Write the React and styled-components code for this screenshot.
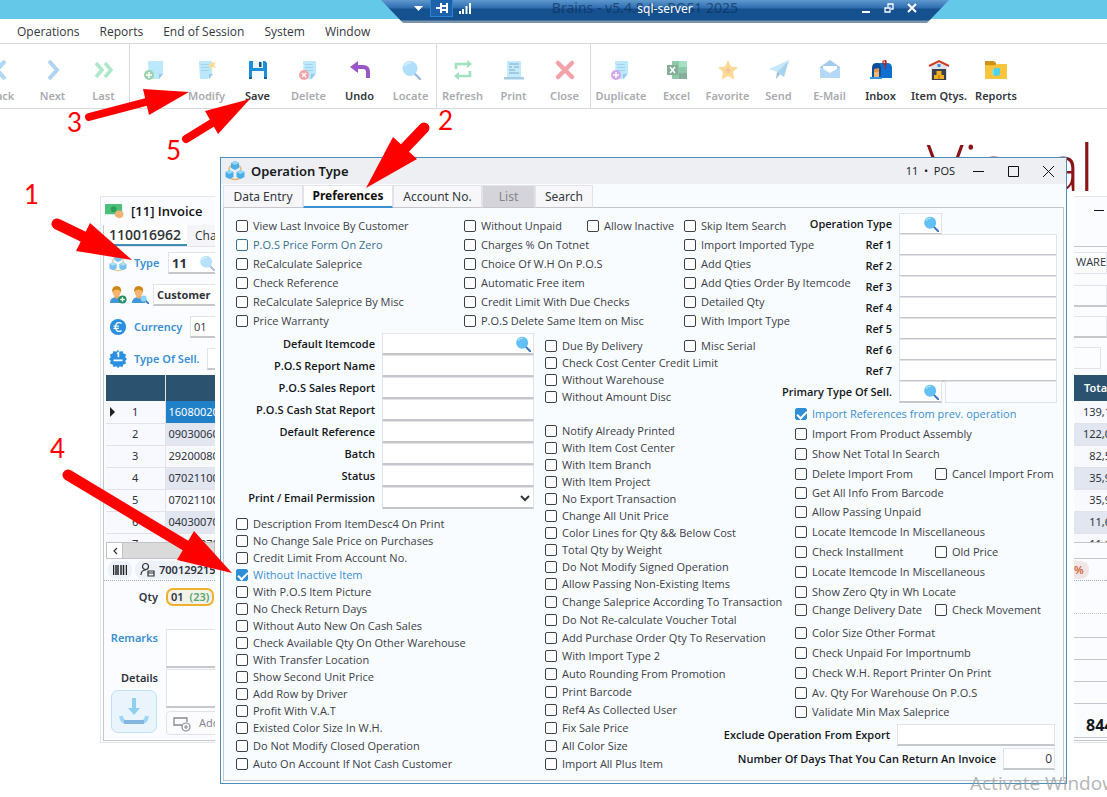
import React, { useState } from "react";
import styled, { createGlobalStyle, css } from "styled-components";

const Global = createGlobalStyle`
  * { box-sizing: border-box; }
  html, body, #root { height: 100%; }
  body {
    margin: 0;
    overflow: hidden;
    background: #fff;
    color: #33373d;
    font: 11px/16px "Open Sans", "Noto Sans", sans-serif;
  }
  button, input, select, textarea { font: inherit; color: inherit; }
  button { cursor: pointer; }
  svg { flex: none; }
`;

const wide = '"Noto Sans", "Open Sans", sans-serif';

const c = {
  blue: "#3c8fd0",
  edge: "#4a90b8",
  line: "#c6c7cd",
  soft: "#e2e3ea",
  pane: "#f8fcff",
  header: "#2b536f",
};

const Desktop = styled.div`
  position: relative;
  min-height: 100%;
  overflow: hidden;
`;

/* ---------- icons ---------- */
const Svg = ({ size = 20, box = 20, children, ...rest }) => (
  <svg width={size} height={size} viewBox={`0 0 ${box} ${box}`} fill="none" aria-hidden="true" {...rest}>
    {children}
  </svg>
);

const Page = ({ x = 3 }) => (
  <>
    <path d={`M${x} 1h13v13l-4 5H${x + 1}z`} fill="#79d3f7" />
    <path d="M12 19v-5h4z" fill="#3a8fd8" />
    <path d={`M${x + 2} 4.500h8M${x + 2} 7.500h8M${x + 2} 10.500h8`} stroke="#4aa6dd" strokeWidth="1.200" />
  </>
);

const icons = {
  back: <path d="M13 1 5 10l8 9" stroke="#5fb2ea" strokeWidth="4" />,
  next: <path d="m6 1 8 9-8 9" stroke="#5fa9e4" strokeWidth="4" />,
  last: <path d="m2 3 6 7-6 7M11 3l6 7-6 7" stroke="#5ed197" strokeWidth="3.500" />,
  add: (
    <>
      <path d="M2 1h15v13l-4 5H3z" fill="#79d3f7" />
      <path d="M13 19v-5h4z" fill="#3a8fd8" />
      <circle cx="3" cy="15" r="5" fill="#3ba55d" />
      <path d="M3 12v6M0 15h6" stroke="#fff" strokeWidth="1.500" />
    </>
  ),
  modify: (
    <>
      <Page x={2} />
      <path d="m14 0 1 3 4-1-2 3 2 3-4-1-2 3v-4l-3-1 4-1z" fill="#f6b92c" />
    </>
  ),
  save: (
    <>
      <path d="M1 1h16l2 2v16H1z" fill="#1d8fd6" />
      <path d="M5 1h10v7H5z" fill="#e9f5fc" />
      <path d="M11 2h2.500v5H11z" fill="#1b4f80" />
      <path d="M4 11h12v8H4z" fill="#f4fafe" />
      <path d="M1 17h3v2H1zM16 17h3v2h-3z" fill="#12609c" />
    </>
  ),
  del: (
    <>
      <Page x={4} />
      <circle cx="5" cy="15" r="5" fill="#ea4d57" />
      <path d="m3 13 4 4M7 13l-4 4" stroke="#fff" strokeWidth="1.300" />
    </>
  ),
  undo: (
    <>
      <path d="M7 7h6q5 0 5 5v6" stroke="#9a55c7" strokeWidth="4" />
      <path d="M8 1v12L0 7z" fill="#9a55c7" />
    </>
  ),
  locate: (
    <>
      <path d="m13 13 6 6" stroke="#3574c4" strokeWidth="2.400" strokeLinecap="round" />
      <circle cx="9" cy="8.500" r="7.500" fill="#62c1f4" />
      <path d="M4 6q2-4 6-3" stroke="#b5e4fc" strokeWidth="1.500" />
    </>
  ),
  refresh: (
    <>
      <path d="M3 9V4h12M17 11v5H5" stroke="#43c47f" strokeWidth="2.600" />
      <path d="m14 0 5 4-5 4zM6 12l-5 4 5 4z" fill="#43c47f" />
    </>
  ),
  print: (
    <>
      <path d="M3 1h14v17H3z" fill="#8bd8f8" />
      <path d="M0 17h20v2.500H0z" fill="#4d96cf" />
      <path d="M5 4h10M5 7h3M10 7h5M5 10h6M5 13h10" stroke="#2f7db7" strokeWidth="1.300" />
    </>
  ),
  close: <path d="m3 3 14 14M17 3 3 17" stroke="#ea4553" strokeWidth="4.500" strokeLinecap="round" />,
  duplicate: (
    <>
      <Page x={4} />
      <circle cx="5" cy="15" r="5" fill="#a64fdb" />
      <path d="M5 12v6M2 15h6" stroke="#fff" strokeWidth="1.500" />
    </>
  ),
  excel: (
    <>
      <path d="M5 1h15v18H5z" fill="#21905a" />
      <path d="M12 1h8v6h-8z" fill="#4ec68d" />
      <path d="M12 13h8v6h-8z" fill="#14603a" />
      <path d="M0 5h11v10H0z" fill="#0a6233" />
      <path d="m3 7 5 6M8 7l-5 6" stroke="#fff" strokeWidth="1.500" />
    </>
  ),
  favorite: (
    <>
      <path d="m10 0 3 6.500 7 .8-5 4.700 1.300 7.500L10 16l-6.300 3.500L5 12 0 7.300l7-.8z" fill="#f7b92e" />
      <path d="M10 7.500v6M7 10.500h6" stroke="#ee7b39" strokeWidth="1.500" />
    </>
  ),
  send: (
    <>
      <path d="M0 9 20 0 8 12z" fill="#8fd3f7" />
      <path d="M20 0 15 17 8 12z" fill="#53a8de" />
      <path d="m8 12-1 7 4-5z" fill="#2f7fbb" />
    </>
  ),
  email: (
    <>
      <path d="m0 7 10-7 10 7v11H0z" fill="#4596dc" />
      <path d="M3 6h14v7H3z" fill="#fff" />
      <path d="m0 7 10 6 10-6v11H0z" fill="#6bb5ee" />
    </>
  ),
  inbox: (
    <>
      <path d="M5 3h11q5 0 5 5v10H5z" fill="#0f6fd0" />
      <path d="M1 18V8q0-5 4.500-5T10 8v10z" fill="#0b4f9c" />
      <path d="M3 17V9l5-1v9z" fill="#e79541" />
      <path d="M3 12h5v5H3z" fill="#f4b873" />
      <path d="M-1 17h12v2H-1z" fill="#2f93e8" />
      <path d="M14.500 9V0M12 1h3v3h-3z" stroke="#b02028" strokeWidth="1.200" />
    </>
  ),
  house: (
    <>
      <path d="M2 6 10 1l8 5v14H2z" fill="#dfe4ea" />
      <path d="M0 6 10 1l10 5" stroke="#cf3a24" strokeWidth="2" />
      <path d="M3 9h14v11H3z" fill="#3a4148" />
      <path d="M8.500 4h3v3h-3z" fill="#3b8fd9" />
      <path d="M5 15h10v4H5zM7.500 11h5v4h-5z" fill="#f0b020" />
      <path d="M10 15v4" stroke="#a87208" />
    </>
  ),
  folder: (
    <>
      <path d="M-1 1h9l2 2v5H-1z" fill="#cf9315" />
      <path d="M-1 5q11 1 12-1h10v14q0 1-1 1H0q-1 0-1-1z" fill="#f8c53c" />
      <path d="M8 8h6v6l-2 2H8z" fill="#4fd3ef" />
      <path d="M6 9.500h2v5H6z" fill="#8fe0c0" />
    </>
  ),
};

const Cubes = ({ size = 20, faded }) => (
  <Svg size={size} opacity={faded ? 0.75 : 1}>
    <path d="M4 9q0-5 6-6 6 1 6 6M5 17q5 3 10 0" stroke="#e3b778" strokeWidth="1.500" />
    <path d="m10 0 4 2v5l-4 2-4-2V2zM4.500 9l4 2v5l-4 2-4-2v-5zM15.500 9l4 2v5l-4 2-4-2v-5z" fill="#4aaeea" />
    <path d="m10 0 4 2-4 2-4-2zM4.500 9l4 2-4 2-4-2zM15.500 9l4 2-4 2-4-2z" fill="#93d8f9" />
  </Svg>
);

const Lens = ({ size = 16, faded }) => (
  <Svg size={size} opacity={faded ? 0.45 : 1}>{icons.locate}</Svg>
);

const Person = ({ children }) => (
  <Svg size={18}>
    <path d="M1 19q0-6 7.500-7T16 19z" fill="#3c97dd" />
    <path d="M6 10h5v3q-2.500 2-5 0z" fill="#f0a860" />
    <ellipse cx="8.500" cy="6.500" rx="4.500" ry="5.500" fill="#f7b56f" />
    <path d="M3.500 7Q3 0 8.500 0T13.500 7Q12 4 8.500 4T3.500 7z" fill="#c98714" />
    {children}
  </Svg>
);

/* ---------- top bars ---------- */
const TitleBar = styled.header`
  height: 19px;
  background: #64c8e8;
`;
const SessionBar = styled.div`
  position: absolute;
  z-index: 3;
  top: 0;
  left: 381px;
  right: 158px;
  height: 23px;
  padding: 0 26px;
  display: grid;
  grid-template-columns: 1fr auto 1fr;
  align-items: start;
  color: #fff;
  font: 12px/18px ${wide};
  background: linear-gradient(#5e98cd 0, #2e6cb0 8px, #15508f 9px, #15508f 20px, #7b93ab 21px);
  clip-path: polygon(0 0, 100% 0, calc(100% - 22px) 100%, 22px 100%);
`;
const AppTitle = styled.span`
  position: absolute;
  top: 0;
  right: 211px;
  font: 14px/16px ${wide};
  color: #0b2f58;
  opacity: 0.65;
`;
const SessionName = styled.span`
  position: relative;
`;
const SessionTools = styled.div`
  display: flex;
  justify-content: ${(p) => (p.$end ? "flex-end" : "flex-start")};
`;
const SessionButton = styled.button`
  width: 23px;
  height: 17px;
  padding: 0;
  border: 1px solid ${(p) => (p.$on ? "#2b84d4" : "transparent")};
  border-top: 0;
  background: ${(p) => (p.$on ? "#1c62ab" : "none")};
  display: grid;
  place-items: center;
`;

const MenuBar = styled.nav`
  height: 25px;
  padding: 1px 0 0 17px;
  display: flex;
  align-items: center;
  gap: 20px;
  border-bottom: 1px solid #d9d9dc;
`;
const MenuItem = styled.button`
  padding: 0;
  border: 0;
  background: none;
  font-size: 12px;
  line-height: 18px;
`;

const Toolbar = styled.div`
  height: 65px;
  margin-left: -24px;
  display: flex;
  border-bottom: 1px solid #d9d9dc;
`;
const ToolGroup = styled.div`
  display: flex;
  border-right: ${(p) => (p.$last ? 0 : "1px solid #d9d9dc")};
`;
const ToolButton = styled.button`
  width: ${(p) => p.$w || 51}px;
  padding: 16px 0 0;
  border: 0;
  background: none;
  display: flex;
  flex-direction: column;
  align-items: center;
  gap: 8px;
  font-family: ${wide};
  font-weight: 600;
  white-space: nowrap;
  color: ${(p) => (p.disabled ? "#a9abb0" : "#33373d")};
  svg { opacity: ${(p) => (p.disabled ? 0.5 : 1)}; overflow: visible; }
`;

const tools = [
  [["back", "Back"], ["next", "Next"], ["last", "Last"]],
  [["add", ""], ["modify", "Modify"], ["save", "Save", 1], ["del", "Delete"], ["undo", "Undo", 1], ["locate", "Locate"]],
  [["refresh", "Refresh"], ["print", "Print"], ["close", "Close"]],
  [["duplicate", "Duplicate", 0, 60], ["excel", "Excel"], ["favorite", "Favorite"], ["send", "Send"], ["email", "E-Mail"],
    ["inbox", "Inbox", 1], ["house", "Item Qtys.", 1, 66], ["folder", "Reports", 1, 48]],
];

const Brand = styled.div`
  position: absolute;
  top: 122px;
  right: 13px;
  font: 300 64px/90px "Open Sans", "Noto Sans", sans-serif;
  color: #8b1217;
`;

/* ---------- shared fields ---------- */
const box = css`
  min-width: 0;
  height: 22px;
  padding: 0 4px;
  border: 1px solid ${c.soft};
  border-bottom: 2px solid ${c.line};
  border-radius: 0;
  background: #fff;
  outline: none;
`;
const TextInput = styled.input`
  ${box}
  width: 100%;
  padding: 0 2px 0 3px;
  text-align: ${(p) => (p.$right ? "right" : "left")};
  font-weight: ${(p) => (p.$bold ? 700 : 400)};
  font-size: ${(p) => p.$size || 12}px;
`;
const Select = styled.select`
  ${box}
  width: 100%;
`;
const FieldSlot = styled.span`
  flex: none;
  position: relative;
  display: flex;
  width: ${(p) => p.$w}px;
`;
const LensButton = styled.button`
  position: absolute;
  right: 2px;
  top: 2px;
  width: 18px;
  height: 18px;
  padding: 0;
  border: 0;
  background: none;
  display: grid;
  place-items: center;
`;

/* ---------- invoice window ---------- */
const Invoice = styled.section`
  position: absolute;
  top: 196px;
  left: 100px;
  right: 0;
  display: flex;
  justify-content: space-between;
  color: #2f3339;
`;
const InvoiceSide = styled.div`
  width: ${(p) => p.$w}px;
  height: 547px;
  overflow: hidden;
  background: #fafcff;
  border: solid #e3e5ea;
  border-width: ${(p) => (p.$left ? "1px 0 1px 1px" : "1px 0")};
  display: flex;
  flex-direction: column;
`;
const InvoiceTitle = styled.div`
  height: 28px;
  padding-left: 4px;
  display: flex;
  align-items: center;
  gap: 7px;
  white-space: nowrap;
  font-size: 13px;
  font-weight: 600;
  color: #111;
`;
const InvoiceInner = styled.div`
  flex: 1;
  margin-left: ${(p) => (p.$left ? 2 : 0)}px;
  margin-bottom: 1px;
  border: solid ${c.line};
  border-width: ${(p) => (p.$left ? "0 0 1px 1px" : "0 0 1px")};
`;
const InvoiceTabs = styled.div`
  display: flex;
  height: 22px;
  border-bottom: 1px solid ${c.soft};
`;
const InvoiceTab = styled.button`
  flex: none;
  width: 83px;
  padding: 0 0 0 ${(p) => (p.$on ? 5 : 8)}px;
  text-align: left;
  border: 0;
  border-bottom: ${(p) => (p.$on ? "2px solid #3d8fb5" : "0")};
  background: ${(p) => (p.$on ? "#fff" : "#f5f5f9")};
  font-size: ${(p) => (p.$on ? 14 : 12)}px;
  line-height: 18px;
  font-weight: ${(p) => (p.$on ? 600 : 400)};
`;
const InvoiceRow = styled.div`
  height: 32px;
  padding-left: 5px;
  display: flex;
  align-items: center;
  gap: 4px;
  white-space: nowrap;
`;
const BlueLabel = styled.label`
  flex: none;
  width: ${(p) => p.$w}px;
  padding-left: 3px;
  font-family: ${wide};
  font-weight: 600;
  color: ${c.blue};
`;
const Grid = styled.table`
  width: ${(p) => p.$w}px;
  margin-left: ${(p) => (p.$left ? 2 : 0)}px;
  table-layout: fixed;
  border-collapse: collapse;
  font-family: ${wide};
  th { height: 26px; padding: 0 0 0 10px; text-align: left; background: ${c.header}; color: #fff; font-weight: 600; }
  th + th { border-left: 1px solid #dfe5ec; }
  td { height: 22px; padding: 0; border-bottom: 1px solid ${c.soft}; background: #f7f9ff; white-space: nowrap; }
  td:last-child { text-align: ${(p) => (p.$left ? "left" : "right")}; padding-left: 3px; border-left: ${(p) => (p.$left ? 1 : 0)}px solid ${c.soft}; }
  tr:nth-child(even) td:last-child { background: #e1e6f1; }
`;
const NumCell = styled.td`
  position: relative;
  text-align: center;
`;
const PickCell = styled.td`
  && { background: #2080c8; color: #fff; }
`;
const Marker = styled.i`
  position: absolute;
  left: 4px;
  top: 6px;
  border: solid transparent;
  border-width: 5px 0 5px 5px;
  border-left-color: #222;
`;
const GridClip = styled.div`
  height: 167px;
  overflow: hidden;
`;
const HScroll = styled.div`
  height: 17px;
  margin-left: 2px;
  display: flex;
  background: #dadada;
  border: 1px solid #c2c2c6;
  button { width: 16px; padding: 0; border: 0; border-right: 1px solid #c2c2c6; background: #fff; line-height: 14px; }
`;
const Chips = styled.div`
  height: 22px;
  padding-left: 4px;
  display: flex;
  align-items: center;
  gap: 3px;
  border-bottom: 1px dotted #a5a9b5;
`;
const Chip = styled.span`
  flex: none;
  height: 18px;
  padding: 0 5px;
  display: flex;
  align-items: center;
  gap: 4px;
  border-radius: 8px;
  background: ${(p) => (p.$warm ? "#f1e6e6" : "#edf1fa")};
  color: ${(p) => (p.$warm ? "#d2603a" : "#2f3339")};
  font-family: ${wide};
  font-weight: 600;
`;
const ChipEdge = styled.div`
  display: flex;
  margin-left: -9px;
`;
const QtyCell = styled.div`
  height: 40px;
  display: flex;
  align-items: flex-start;
`;
const QtyChip = styled.output`
  height: 18px;
  padding: 0 3px;
  display: flex;
  align-items: center;
  gap: 6px;
  border: 2px solid #efb02e;
  border-radius: 7px;
  background: #f3f1ec;
  font-weight: 600;
  span { color: #55a868; }
`;
const SideForm = styled.div`
  display: grid;
  grid-template-columns: 54px 1fr;
  column-gap: 8px;
  row-gap: 1px;
  padding-top: 7px;
  font-family: ${wide};
  font-weight: 600;
`;
const SideLabel = styled.label`
  padding-top: 1px;
  text-align: right;
  color: ${(p) => (p.$blue ? c.blue : "#2f3339")};
`;
const Area = styled.textarea`
  ${box}
  width: 100%;
  height: 39px;
  resize: none;
`;
const BigButton = styled.button`
  width: 46px;
  height: 43px;
  margin: -19px 0 0 7px;
  padding: 0;
  border: 1px solid #bfe0f6;
  border-radius: 7px;
  background: #e9f4fd;
  display: grid;
  place-items: center;
`;
const AddButton = styled.button`
  height: 24px;
  margin-top: 2px;
  padding: 0 0 0 6px;
  border: 1px solid ${c.soft};
  border-radius: 4px;
  background: #fcfcfe;
  display: flex;
  align-items: center;
  gap: 8px;
  color: #85888f;
  font-weight: 400;
  white-space: nowrap;
`;
const RightField = styled.div`
  height: 22px;
  margin: ${(p) => p.$m || "0 0 9px"};
  padding-left: 2px;
  line-height: 18px;
  border: 1px solid ${c.soft};
  border-left: 0;
  border-bottom: ${(p) => (p.$flat ? `1px solid ${c.soft}` : `2px solid ${c.line}`)};
  background: #fcfdff;
`;
const Rule = styled.div`
  height: ${(p) => p.$h}px;
  border-bottom: 1px ${(p) => p.$kind || "solid"} ${c.line};
`;
const GrandTotal = styled.div`
  height: 34px;
  padding: 9px 0 0 12px;
  font-size: 16px;
  line-height: 24px;
  font-weight: 700;
  color: #14181d;
  border-bottom: 1px solid ${c.line};
`;

/* ---------- dialog ---------- */
const Dialog = styled.section`
  position: absolute;
  z-index: 1;
  top: 157px;
  left: 220px;
  right: 40px;
  padding: 0 2px 2px;
  border: 1px solid ${c.edge};
  background: ${c.pane};
`;
const DialogTitle = styled.div`
  height: 26px;
  margin: 0 -2px;
  padding-left: 4px;
  display: flex;
  align-items: center;
  gap: 6px;
  background: #eeeff2;
  color: #16191d;
  h1 { margin: 0; flex: 1; font: 600 13px/18px ${wide}; }
`;
const WindowButton = styled.button`
  width: 35px;
  height: 26px;
  padding: 0;
  border: 0;
  background: none;
  display: grid;
  place-items: center;
`;
const WindowButtons = styled.div`
  display: flex;
`;
const Tabs = styled.div`
  margin-top: 1px;
  height: 23px;
  display: flex;
`;
const Tab = styled.button`
  width: ${(p) => p.$w}px;
  padding: 0;
  border: 1px solid ${c.soft};
  border-bottom: ${(p) => (p.$on ? `2px solid ${c.blue}` : `1px solid ${c.line}`)};
  background: ${(p) => (p.disabled ? "#d5d4da" : p.$on ? "#fff" : "#f7f7fa")};
  color: ${(p) => (p.disabled ? "#85868d" : p.$on ? "#111" : "#33373d")};
  font: ${(p) => (p.$on ? 700 : 400)} 12px/16px ${wide};
`;
const Pane = styled.form`
  display: flex;
  padding: 8px 6px 7px 12px;
  border: 1px solid ${c.line};
  margin-top: -1px;
`;
const Main = styled.div`
  flex: 1;
  min-width: 0;
`;
const Aside = styled.div`
  flex: none;
  width: 262px;
  margin-top: -3px;
`;
const TopGrid = styled.div`
  display: grid;
  grid-template-columns: 228px 220px 1fr;
`;
const Split = styled.div`
  display: grid;
  grid-template-columns: 309px 1fr;
`;
const Stack = styled.div`
  padding-top: ${(p) => p.$top || 0}px;
`;
const LeftFields = styled.div`
  width: 298px;
`;
const Line = styled.div`
  height: ${(p) => p.$h}px;
  display: grid;
  grid-template-columns: ${(p) => p.$split || 140}px 1fr;
  align-items: center;
`;
const Option = styled.label`
  display: flex;
  align-items: center;
  gap: 5px;
  white-space: nowrap;
  color: ${(p) => p.$tone || "#3c4047"};
`;
const Tick = styled.input`
  appearance: none;
  flex: none;
  position: relative;
  width: 12px;
  height: 12px;
  margin: 0;
  border: 1px solid currentColor;
  border-radius: 2px;
  background: #fff;
  &:checked { background: #2f8fd6; border-color: #2f8fd6; }
  &:checked::after {
    content: "";
    position: absolute;
    left: 3px;
    top: 0;
    width: 4px;
    height: 8px;
    border: solid #fff;
    border-width: 0 2px 2px 0;
    transform: rotate(45deg);
  }
`;
const FieldRow = styled.div`
  height: ${(p) => p.$h}px;
  padding-right: ${(p) => p.$pad || 0}px;
  display: flex;
  align-items: center;
  justify-content: flex-end;
  gap: 7px;
  white-space: nowrap;
`;
const FieldLabel = styled.label`
  font-weight: 600;
  color: #14171b;
`;
const ReadOnly = styled.input`
  ${box}
  flex: 1;
  margin-left: 3px;
  background: #fafcff;
  border-bottom: 1px solid ${c.soft};
`;

const Check = ({ text, on, tone }) => {
  const [v, setV] = useState(!!on);
  return (
    <Option $tone={v ? c.blue : tone}>
      <Tick type="checkbox" checked={v} onChange={(e) => setV(e.target.checked)} />
      {text}
    </Option>
  );
};

const List = ({ items, h, top, split }) => (
  <Stack $top={top}>
    {items.map((it, i) => {
      const parts = Array.isArray(it) ? it : [it];
      return (
        <Line key={i} $h={h} $split={split}>
          {parts.map((t) => (
            <Check key={t} text={t.replace("*", "")} on={t.endsWith("*")} tone={t.startsWith("P.O.S Price") ? "#39708f" : undefined} />
          ))}
        </Line>
      );
    })}
  </Stack>
);

const Field = ({ label, id, h, w, lens, select, right, value, pad, slot, extra }) => (
  <FieldRow $h={h} $pad={pad}>
    <FieldLabel htmlFor={id}>{label}</FieldLabel>
    <FieldSlot $w={slot || w}>
      <FieldSlot $w={w}>
        {select ? <Select id={id} /> : <TextInput id={id} defaultValue={value} $right={right} />}
        {lens && (
          <LensButton type="button" aria-label={`Find ${label}`}>
            <Lens />
          </LensButton>
        )}
      </FieldSlot>
      {extra}
    </FieldSlot>
  </FieldRow>
);

const col1 = ["View Last Invoice By Customer", "P.O.S Price Form On Zero", "ReCalculate Saleprice", "Check Reference", "ReCalculate Saleprice By Misc", "Price Warranty"];
const col2 = [["Without Unpaid", "Allow Inactive"], "Charges % On Totnet", "Choice Of W.H On P.O.S", "Automatic Free item", "Credit Limit With Due Checks", "P.O.S Delete Same Item on Misc"];
const col3 = ["Skip Item Search", "Import Imported Type", "Add Qties", "Add Qties Order By Itemcode", "Detailed Qty", "With Import Type"];
const leftFields = ["Default Itemcode", "P.O.S Report Name", "P.O.S Sales Report", "P.O.S Cash Stat Report", "Default Reference", "Batch", "Status", "Print / Email Permission"];
const left1 = ["Description From ItemDesc4 On Print", "No Change Sale Price on Purchases", "Credit Limit From Account No.", "Without Inactive Item*", "With P.O.S Item Picture", "No Check Return Days", "Without Auto New On Cash Sales", "Check Available Qty On Other Warehouse", "With Transfer Location", "Show Second Unit Price", "Add Row by Driver", "Profit With V.A.T"];
const left2 = ["Existed Color Size In W.H.", "Do Not Modify Closed Operation", "Auto On Account If Not Cash Customer"];
const mid1 = [["Due By Delivery", "Misc Serial"], "Check Cost Center Credit Limit", "Without Warehouse", "Without Amount Disc"];
const mid2 = ["Notify Already Printed", "With Item Cost Center", "With Item Branch", "With Item Project", "No Export Transaction", "Change All Unit Price", "Color Lines for Qty && Below Cost", "Total Qty by Weight", "Do Not Modify Signed Operation"];
const mid3 = ["Allow Passing Non-Existing Items", "Change Saleprice According To Transaction", "Do Not Re-calculate Voucher Total", "Add Purchase Order Qty To Reservation", "With Import Type 2", "Auto Rounding From Promotion", "Print Barcode", "Ref4 As Collected User", "Fix Sale Price", "All Color Size", "Import All Plus Item"];
const right1 = ["Import References from prev. operation*", "Import From Product Assembly", "Show Net Total In Search", ["Delete Import From", "Cancel Import From"]];
const right3 = ["Allow Passing Unpaid", "Locate Itemcode In Miscellaneous", ["Check Installment", "Old Price"], "Locate Itemcode In Miscellaneous", "Show Zero Qty in Wh Locate"];
const right5 = ["Color Size Other Format", "Check Unpaid For Importnumb", "Check W.H. Report Printer On Print"];

const items = ["16080020", "09030060", "29200080", "07021100", "07021100", "04030070", "05010070"];
const totals = ["139,1", "122,0", "82,5", "35,9", "35,9", "11,6", "11,1"];

/* ---------- callouts ---------- */
const Callouts = styled.svg`
  position: absolute;
  z-index: 4;
  top: 0;
  left: 0;
  pointer-events: none;
  text { font: 26px Lato, sans-serif; fill: #f00; }
`;
const Watermark = styled.div`
  position: absolute;
  z-index: 2;
  top: 771px;
  left: 970px;
  font-size: 19px;
  line-height: 24px;
  white-space: nowrap;
  color: #9a9da2;
  opacity: 0.75;
`;

const arrows = [
  ["M89 117 146 102", 8, "143,89 189,92 149,115"],
  ["M186 139 212 123", 8, "205,111 250,99 218,134"],
  ["M424 128 403 150", 11, "393,137 366,188 417,159"],
  ["M57 224 86 238", 11, "90,223 132,260 76,251"],
  ["M68 475 188 547", 11, "194,531 232,573 177,560"],
];

export default function App() {
  return (
    <Desktop>
      <Global />
      <TitleBar />
      <SessionBar>
        <AppTitle>Brains - v5.4.8.6 - POS1 2025</AppTitle>
        <SessionTools>
          <SessionButton aria-label="Menu">
            <Svg size={9} box={9}><path d="M0 2h9L4.500 7z" fill="#fff" /></Svg>
          </SessionButton>
          <SessionButton aria-label="Pin" $on>
            <Svg size={12} box={12}><path d="M0 6h5M5 1v10M5 4h6M5 8h6M11 1v10" stroke="#fff" strokeWidth="2" /></Svg>
          </SessionButton>
          <SessionButton aria-label="Signal">
            <Svg size={12} box={12}><path d="M1 9v3M4 7v5M7.500 4v8M11 1v11" stroke="#fff" strokeWidth="2" /></Svg>
          </SessionButton>
        </SessionTools>
        <SessionName>sql-server</SessionName>
        <SessionTools $end>
          <SessionButton aria-label="Minimize">
            <Svg size={10} box={10}><path d="M1 9h8" stroke="#fff" strokeWidth="2" /></Svg>
          </SessionButton>
          <SessionButton aria-label="Restore">
            <Svg size={10} box={10}><path d="M1 5h5v4H1zM4 4V1h5v5H7" stroke="#fff" strokeWidth="1.300" /></Svg>
          </SessionButton>
          <SessionButton aria-label="Close session">
            <Svg size={10} box={10}><path d="m1 1 8 8M9 1 1 9" stroke="#fff" strokeWidth="2" /></Svg>
          </SessionButton>
        </SessionTools>
      </SessionBar>

      <MenuBar>
        {["Operations", "Reports", "End of Session", "System", "Window"].map((m) => (
          <MenuItem key={m}>{m}</MenuItem>
        ))}
      </MenuBar>

      <Toolbar role="toolbar">
        {tools.map((g, i) => (
          <ToolGroup key={i} $last={i === tools.length - 1}>
            {g.map(([icon, label, on, w]) => (
              <ToolButton key={icon} disabled={!on} $w={w} aria-label={label || "New"}>
                <Svg>{icons[icon]}</Svg>
                {label}
              </ToolButton>
            ))}
          </ToolGroup>
        ))}
      </Toolbar>

      <Brand>Visual</Brand>

      <Invoice>
        <InvoiceSide $w={115} $left>
          <InvoiceTitle>
            <Svg size={19}>
              <rect x="0" y="2" width="18" height="11" rx="1" fill="#4cc07a" />
              <circle cx="9" cy="7.500" r="3" fill="#2b9e58" />
              <ellipse cx="15" cy="13" rx="4.500" ry="4" fill="#f2b377" />
            </Svg>
            [11] Invoice
          </InvoiceTitle>
          <InvoiceInner $left>
            <InvoiceTabs>
              <InvoiceTab $on>110016962</InvoiceTab>
              <InvoiceTab>Charges</InvoiceTab>
            </InvoiceTabs>
            <InvoiceRow>
              <Cubes size={18} faded />
              <BlueLabel htmlFor="inv-type" $w={33}>Type</BlueLabel>
              <FieldSlot $w={50}>
                <TextInput id="inv-type" defaultValue="11" $bold $size={13} />
                <LensButton aria-label="Find type"><Lens faded /></LensButton>
              </FieldSlot>
            </InvoiceRow>
            <InvoiceRow>
              <Person>
                <circle cx="15" cy="15" r="4.500" fill="#1f8f5f" />
                <path d="M15 12.500v5M12.500 15h5" stroke="#fff" strokeWidth="1.500" />
              </Person>
              <Person>
                <path d="m16 16 4 4" stroke="#3574c4" strokeWidth="2" />
                <circle cx="14" cy="14" r="3.500" fill="#8bd3f8" />
              </Person>
              <FieldSlot $w={90}>
                <TextInput aria-label="Customer" defaultValue="Customer" $bold $size={11} />
              </FieldSlot>
            </InvoiceRow>
            <InvoiceRow>
              <Svg size={18}>
                <circle cx="10" cy="10" r="9" fill="#2a8fe0" />
                <path d="M14 6q-6-3-7 4 1 7 7 4M5 9h6M5 11.500h6" stroke="#fff" strokeWidth="1.500" />
              </Svg>
              <BlueLabel htmlFor="inv-cur" $w={55}>Currency</BlueLabel>
              <FieldSlot $w={90}>
                <TextInput id="inv-cur" defaultValue="01" $size={11} />
              </FieldSlot>
            </InvoiceRow>
            <InvoiceRow>
              <Svg size={18}>
                <path d="m10 0 2 2 3-1 1 3 3 1-1 3 2 2-2 2 1 3-3 1-1 3-3-1-2 2-2-2-3 1-1-3-3-1 1-3-2-2 2-2-1-3 3-1 1-3 3 1z" fill="#2a8fe0" />
                <path d="M9 4.500 10.500 3v5M5 11.500h10" stroke="#fff" strokeWidth="1.800" />
              </Svg>
              <BlueLabel htmlFor="inv-sell" $w={72}>Type Of Sell.</BlueLabel>
              <FieldSlot $w={90}>
                <TextInput id="inv-sell" />
              </FieldSlot>
            </InvoiceRow>
            <GridClip>
              <Grid $left $w={170}>
                <colgroup><col width="59" /><col /></colgroup>
                <thead><tr><th aria-label="Line" /><th aria-label="Item" /></tr></thead>
                <tbody>
                  {items.map((v, i) => (
                    <tr key={i}>
                      <NumCell>{i === 0 && <Marker />}{i + 1}</NumCell>
                      {i === 0 ? <PickCell>{v}</PickCell> : <td>{v}</td>}
                    </tr>
                  ))}
                </tbody>
              </Grid>
            </GridClip>
            <HScroll>
              <button aria-label="Scroll left"><Svg size={8} box={8}><path d="M6 1 3 4l3 3" stroke="#333" strokeWidth="1.200" /></Svg></button>
            </HScroll>
            <Chips>
              <Chip>
                <Svg size={14} box={14}><path d="M.5 2v10M3 2v10M5 2v10M8 2v10M10.500 2v10M13.500 2v10" stroke="#222" strokeWidth="1.500" /></Svg>
              </Chip>
              <Chip>
                <Svg size={15} box={15}>
                  <circle cx="5.500" cy="4.500" r="3" stroke="#333" strokeWidth="1.200" />
                  <path d="M1 13q0-5 5-5M8 9h6v5H8zM8 11h6" stroke="#333" strokeWidth="1.200" />
                </Svg>
                700129215
              </Chip>
            </Chips>
            <SideForm>
              <SideLabel as="span">Qty</SideLabel>
              <QtyCell>
                <QtyChip>01 <span>(23)</span></QtyChip>
              </QtyCell>
              <SideLabel htmlFor="inv-rem" $blue>Remarks</SideLabel>
              <Area id="inv-rem" />
              <SideLabel htmlFor="inv-det">Details</SideLabel>
              <Area id="inv-det" />
              <BigButton aria-label="Download">
                <Svg size={30} box={30}>
                  <path d="M15 1v12" stroke="#8fcff2" strokeWidth="4" />
                  <path d="M9 11h12l-6 7z" fill="#8fcff2" />
                  <path d="M2 19q1 6 5 6M28 19q-1 6-5 6" stroke="#9fd6f5" strokeWidth="4" />
                  <path d="M5 25h20" stroke="#86b4e0" strokeWidth="4" />
                </Svg>
              </BigButton>
              <AddButton>
                <Svg size={18} box={18}>
                  <path d="M9 11H1V4h13v4" stroke="#85888f" strokeWidth="1.300" />
                  <circle cx="13" cy="13" r="4" stroke="#85888f" strokeWidth="1.200" />
                  <path d="M13 11v4M11 13h4" stroke="#85888f" />
                </Svg>
                Add
              </AddButton>
            </SideForm>
          </InvoiceInner>
        </InvoiceSide>

        <InvoiceSide $w={33}>
          <InvoiceTitle>
            <Svg size={26} box={26}><path d="M16 12.500h10" stroke="#111" /></Svg>
          </InvoiceTitle>
          <InvoiceInner>
            <Rule $h={22} />
            <RightField $m="5px 0 11px" $flat>WARE</RightField>
            <RightField />
            <RightField />
            <RightField $m="0 6px 6px 0" $flat />
            <GridClip>
              <Grid $w={37}>
                <thead><tr><th>Total</th></tr></thead>
                <tbody>
                  {totals.map((v, i) => <tr key={i}><td>{v}</td></tr>)}
                </tbody>
              </Grid>
            </GridClip>
            <Rule $h={1} />
            <Rule $h={16} />
            <Chips>
              <ChipEdge><Chip $warm>%</Chip></ChipEdge>
            </Chips>
            <Rule $h={33} $kind="dotted" />
            <Rule $h={24} />
            <Rule $h={22} />
            <Rule $h={22} />
            <Rule $h={22} />
            <GrandTotal>844</GrandTotal>
          </InvoiceInner>
        </InvoiceSide>
      </Invoice>

      <Dialog role="dialog" aria-label="Operation Type">
        <DialogTitle>
          <Cubes />
          <h1>Operation Type</h1>
          <span>11 &nbsp;•&nbsp; POS</span>
          <WindowButtons>
            <WindowButton aria-label="Minimize"><Svg size={11} box={11}><path d="M0 5.500h11" stroke="#111" /></Svg></WindowButton>
            <WindowButton aria-label="Maximize"><Svg size={11} box={11}><path d="M.5.5h10v10H.5z" stroke="#111" /></Svg></WindowButton>
            <WindowButton aria-label="Close"><Svg size={11} box={11}><path d="m0 0 11 11M11 0 0 11" stroke="#111" /></Svg></WindowButton>
          </WindowButtons>
        </DialogTitle>
        <Tabs role="tablist">
          <Tab role="tab" $w={80}>Data Entry</Tab>
          <Tab role="tab" $w={90} $on>Preferences</Tab>
          <Tab role="tab" $w={89}>Account No.</Tab>
          <Tab role="tab" $w={53} disabled>List</Tab>
          <Tab role="tab" $w={58}>Search</Tab>
        </Tabs>
        <Pane>
          <Main>
            <TopGrid>
              <List items={col1} h={19} />
              <List items={col2} h={19} split={123} />
              <List items={col3} h={19} />
            </TopGrid>
            <Split>
              <Stack $top={3}>
                <LeftFields>
                  {leftFields.map((f, i) => (
                    <Field key={f} id={`l${i}`} label={f} h={22} w={152} lens={i === 0} select={i === 7} />
                  ))}
                </LeftFields>
                <List items={left1} h={17} top={6} />
                <List items={left2} h={18} />
              </Stack>
              <Stack $top={7}>
                <List items={mid1} h={17} split={139} />
                <List items={mid2} h={17} top={17} />
                <List items={mid3} h={18} />
              </Stack>
            </Split>
          </Main>
          <Aside>
            <Field id="r0" label="Operation Type" h={21} w={43} slot={158} lens />
            {[1, 2, 3, 4, 5, 6, 7].map((n) => (
              <Field key={n} id={`r${n}`} label={`Ref ${n}`} h={21} w={158} />
            ))}
            <Field id="r8" label="Primary Type Of Sell." h={21} w={43} slot={158} lens extra={<ReadOnly readOnly aria-label="Type of sell name" />} />
            <List items={right1} h={20} top={2} />
            <List items={["Get All Info From Barcode"]} h={18} />
            <List items={right3} h={20} />
            <List items={[["Change Delivery Date", "Check Movement"]]} h={16} />
            <List items={right5} h={20} top={5} />
            <List items={["Av. Qty For Warehouse On P.O.S", "Validate Min Max Saleprice"]} h={19} />
            <Stack $top={2}>
              <Field id="ex" label="Exclude Operation From Export" h={24} w={158} pad={2} />
              <Field id="nd" label="Number Of Days That You Can Return An Invoice" h={24} w={52} pad={2} value="0" right />
            </Stack>
          </Aside>
        </Pane>
      </Dialog>

      <Watermark>Activate Windows</Watermark>

      <Callouts width="500" height="600" aria-hidden="true">
        {arrows.map(([d, w, pts]) => (
          <g key={pts}>
            <path d={d} stroke="#f00" strokeWidth={w} strokeLinecap="round" />
            <polygon points={pts} fill="#f00" />
          </g>
        ))}
        <text x="24" y="204">1</text>
        <text x="438" y="130">2</text>
        <text x="67" y="132">3</text>
        <text x="50" y="458">4</text>
        <text x="166" y="160">5</text>
      </Callouts>
    </Desktop>
  );
}
